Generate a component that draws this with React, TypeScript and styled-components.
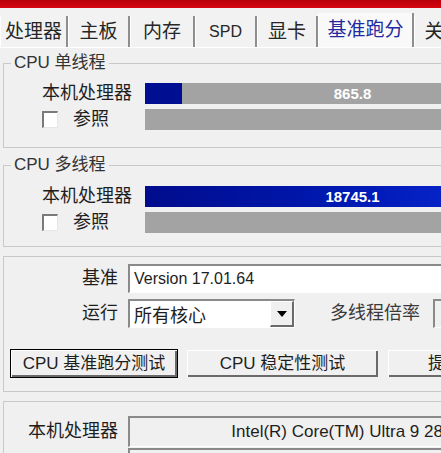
import React from "react";
import styled, { createGlobalStyle } from "styled-components";

const FONT = `"Liberation Sans", "Noto Sans CJK SC", sans-serif`;

const GlobalStyle = createGlobalStyle`
  html, body {
    margin: 0;
    padding: 0;
    background: #f0f0f0;
    overflow: hidden;
  }
`;

const Window = styled.div`
  width: 580px;
  background: #f0f0f0;
  font-family: ${FONT};
  color: #1e1e1e;
`;

const TitleStrip = styled.div`
  height: 8px;
  background: linear-gradient(#b8000a, #d6060f);
`;

const TabBar = styled.div`
  height: 39px;
  display: flex;
  align-items: flex-end;
  background: #f2f2f2;
  border-bottom: 1px solid #ffffff;
`;

const Tab = styled.div<{ $width: number; $active?: boolean }>`
  box-sizing: border-box;
  width: ${(p) => p.$width}px;
  height: ${(p) => (p.$active ? 34 : 31)}px;
  display: flex;
  align-items: center;
  justify-content: center;
  padding-bottom: ${(p) => (p.$active ? 1 : 0)}px;
  margin-top: auto;
  border-left: 1px solid #ffffff;
  border-right: 2px solid #8e8e8e;
  background: ${(p) => (p.$active ? "#f9f9f9" : "#f2f2f2")};
  font-size: 19px;
  line-height: 22px;
  color: ${(p) => (p.$active ? "#1f2b9e" : "#262626")};
  white-space: nowrap;
  flex-shrink: 0;
`;

const Panel = styled.div`
  display: flex;
  flex-direction: column;
  padding-left: 3px;
`;

const Group = styled.fieldset<{
  $top: number;
  $pt: number;
  $pb: number;
  $pl: number;
}>`
  margin: ${(p) => p.$top}px 0 0 0;
  padding: ${(p) => `${p.$pt}px 0 ${p.$pb}px ${p.$pl}px`};
  border: 1px solid #c9c9c9;
  min-width: 0;
`;

const Legend = styled.legend`
  margin-left: -31px;
  padding: 0 3px;
  font-size: 17px;
  line-height: 20px;
  color: #333333;
`;

const BarGrid = styled.div`
  display: grid;
  grid-template-columns: 103px 415px;
  grid-auto-rows: 21px;
  row-gap: 5px;
  align-items: center;
`;

const RowLabel = styled.div`
  font-size: 18px;
  line-height: 21px;
  color: #1e1e1e;
  white-space: nowrap;
`;

const CheckLabel = styled.div`
  display: flex;
  align-items: center;
  gap: 15px;
  font-size: 18px;
  line-height: 21px;
  color: #1e1e1e;
`;

const CheckBox = styled.span`
  box-sizing: border-box;
  width: 16px;
  height: 17px;
  background: #ffffff;
  border-top: 2px solid #7a7a7a;
  border-left: 2px solid #7a7a7a;
  border-right: 1px solid #e6e6e6;
  border-bottom: 1px solid #e6e6e6;
`;

const Bar = styled.div`
  position: relative;
  height: 21px;
  background: #a3a3a3;
  display: flex;
  align-items: center;
  justify-content: center;
  overflow: hidden;
`;

const BarFill = styled.div<{ $multi?: boolean }>`
  position: absolute;
  left: 0;
  top: 0;
  bottom: 0;
  background: ${(p) =>
    p.$multi
      ? "linear-gradient(to right, #000c8c, #001bb8 55%, #1030e0)"
      : "#000f92"};
`;

const BarValue = styled.span`
  position: relative;
  font-size: 15px;
  font-weight: bold;
  color: #ffffff;
  font-family: "Liberation Sans", sans-serif;
`;

const FormGrid = styled.div<{ $gap?: number }>`
  display: grid;
  grid-template-columns: 106px auto;
  column-gap: 10px;
  row-gap: ${(p) => p.$gap ?? 6}px;
  align-items: center;
`;

const FormLabel = styled.div`
  text-align: right;
  font-size: 18px;
  line-height: 21px;
  color: #1e1e1e;
  white-space: nowrap;
`;

const Field = styled.div<{ $width: number; $height?: number; $gray?: boolean }>`
  box-sizing: border-box;
  width: ${(p) => p.$width}px;
  height: ${(p) => p.$height ?? 29}px;
  display: flex;
  align-items: center;
  justify-content: ${(p) => (p.$gray ? "center" : "flex-start")};
  padding-left: ${(p) => (p.$gray ? 0 : 4)}px;
  background: ${(p) => (p.$gray ? "#f0f0f0" : "#ffffff")};
  border-top: 2px solid #8a8a8a;
  border-left: 2px solid #8a8a8a;
  border-right: 1px solid #ffffff;
  border-bottom: 1px solid #ffffff;
  font-size: ${(p) => (p.$gray ? 17 : 16)}px;
  color: #1e1e1e;
  white-space: nowrap;
  overflow: hidden;
`;

const ComboText = styled.span`
  flex: 1;
  font-size: 18px;
`;

const DropButton = styled.div`
  box-sizing: border-box;
  width: 24px;
  height: 26px;
  display: flex;
  align-items: center;
  justify-content: center;
  background: #f0f0f0;
  border-top: 1px solid #ffffff;
  border-left: 1px solid #ffffff;
  border-right: 2px solid #6a6a6a;
  border-bottom: 2px solid #6a6a6a;
`;

const Arrow = styled.span`
  width: 0;
  height: 0;
  border-left: 5px solid transparent;
  border-right: 5px solid transparent;
  border-top: 6px solid #000000;
`;

const RunRow = styled.div`
  display: flex;
  align-items: center;
`;

const RatioLabel = styled.span`
  margin-left: 35px;
  margin-right: 13px;
  font-size: 18px;
  line-height: 21px;
  color: #3a3a3a;
  white-space: nowrap;
`;

const ButtonRow = styled.div`
  display: flex;
  gap: 8px;
  margin: 21px 0 0 -2px;
`;

const Button = styled.div<{ $width: number; $default?: boolean; $pad?: number }>`
  box-sizing: border-box;
  width: ${(p) => p.$width}px;
  height: 29px;
  display: flex;
  align-items: center;
  justify-content: ${(p) => (p.$pad ? "flex-start" : "center")};
  padding-left: ${(p) => p.$pad ?? 0}px;
  flex-shrink: 0;
  background: #f0f0f0;
  border: 1px solid ${(p) => (p.$default ? "#000000" : "#f0f0f0")};
  box-shadow: inset 1px 1px #ffffff, inset -2px -2px #6a6a6a;
  font-size: 17px;
  line-height: 21px;
  color: #1e1e1e;
  white-space: nowrap;
`;

const tabs = [
  { label: "处理器", width: 68 },
  { label: "主板", width: 62 },
  { label: "内存", width: 65 },
  { label: "SPD", width: 62, small: true },
  { label: "显卡", width: 61 },
  { label: "基准跑分", width: 96, active: true },
  { label: "关于", width: 60 },
];

const App = () => {
  return (
    <Window>
      <GlobalStyle />
      <TitleStrip />
      <TabBar>
        {tabs.map((t) => (
          <Tab key={t.label} $width={t.width} $active={t.active}>
            {t.small ? <span style={{ fontSize: 16 }}>{t.label}</span> : t.label}
          </Tab>
        ))}
      </TabBar>
      <Panel>
        <Group $top={5} $pt={10} $pb={17} $pl={38}>
          <Legend>CPU 单线程</Legend>
          <BarGrid>
            <RowLabel>本机处理器</RowLabel>
            <Bar>
              <BarFill style={{ width: 37 }} />
              <BarValue>865.8</BarValue>
            </Bar>
            <CheckLabel>
              <CheckBox />
              参照
            </CheckLabel>
            <Bar />
          </BarGrid>
        </Group>

        <Group $top={7} $pt={11} $pb={13} $pl={38}>
          <Legend>CPU 多线程</Legend>
          <BarGrid>
            <RowLabel>本机处理器</RowLabel>
            <Bar>
              <BarFill $multi style={{ width: "100%" }} />
              <BarValue>18745.1</BarValue>
            </Bar>
            <CheckLabel>
              <CheckBox />
              参照
            </CheckLabel>
            <Bar />
          </BarGrid>
        </Group>

        <Group $top={9} $pt={7} $pb={13} $pl={8}>
          <FormGrid>
            <FormLabel>基准</FormLabel>
            <Field $width={438}>Version 17.01.64</Field>
            <FormLabel>运行</FormLabel>
            <RunRow>
              <Field $width={167}>
                <ComboText>所有核心</ComboText>
                <DropButton>
                  <Arrow />
                </DropButton>
              </Field>
              <RatioLabel>多线程倍率</RatioLabel>
              <Field $width={133} $gray />
            </RunRow>
          </FormGrid>
          <ButtonRow>
            <Button $width={168} $default>
              CPU 基准跑分测试
            </Button>
            <Button $width={193}>CPU 稳定性测试</Button>
            <Button $width={170} $pad={40}>
              提交和比较
            </Button>
          </ButtonRow>
        </Group>

        <Group $top={9} $pt={14} $pb={12} $pl={8}>
          <FormGrid $gap={1}>
            <FormLabel>本机处理器</FormLabel>
            <Field $width={438} $height={31} $gray>
              Intel(R) Core(TM) Ultra 9 285K
            </Field>
            <FormLabel>参照</FormLabel>
            <Field $width={438} $height={31} $gray>
              &lt;请选择&gt;
            </Field>
          </FormGrid>
        </Group>
      </Panel>
    </Window>
  );
};

export default App;
